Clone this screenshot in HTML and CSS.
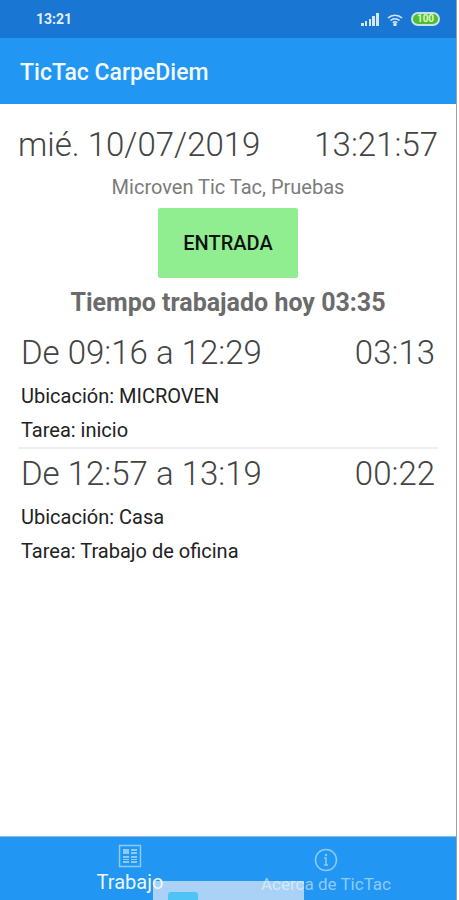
FILE: index.html
```
<!DOCTYPE html>
<html lang="es">
<head>
    <meta charset="UTF-8">
    <meta name="viewport" content="width=device-width, initial-scale=1.0">
    <title>TicTac CarpeDiem</title>
    <link rel="stylesheet" href="styles.css">
</head>
<body>
    <div class="app">
        <div class="status-bar">
            <span class="status-time">13:21</span>
            <div class="status-icons">
                <svg class="signal" viewBox="0 0 18 13" width="18" height="13">
                    <path d="M0 10h3v3H0zM4 8h2v5H4zM8 6h2v7H8zM11 3h3v10h-3zM15 0h3v13h-3z"/>
                </svg>
                <svg class="wifi" viewBox="0 0 16 13" width="16" height="13">
                    <path d="M1 5a10 10 0 0 1 14 0M3.500 7.500a6.500 6.500 0 0 1 9 0M5.800 9.800a3.200 3.200 0 0 1 4.400 0"/>
                    <circle cx="8" cy="11.500" r="1"/>
                </svg>
                <span class="battery">100</span>
            </div>
        </div>

        <header class="header">
            <h1>TicTac CarpeDiem</h1>
        </header>

        <main class="content">
            <div class="row">
                <span>mié. 10/07/2019</span>
                <span>13:21:57</span>
            </div>
            <p class="user">Microven Tic Tac, Pruebas</p>
            <button type="button" class="entry-button">ENTRADA</button>
            <h2 class="total">Tiempo trabajado hoy 03:35</h2>

            <!-- Registros del día -->
            <ul class="records">
                <li class="record">
                    <div class="row">
                        <span>De 09:16 a 12:29</span>
                        <span>03:13</span>
                    </div>
                    <p>Ubicación: MICROVEN</p>
                    <p>Tarea: inicio</p>
                </li>
                <li class="record">
                    <div class="row">
                        <span>De 12:57 a 13:19</span>
                        <span>00:22</span>
                    </div>
                    <p>Ubicación: Casa</p>
                    <p>Tarea: Trabajo de oficina</p>
                </li>
            </ul>
        </main>

        <nav class="tabs">
            <div class="toast"><span class="toast-icon"></span></div>
            <a href="#trabajo" class="tab active">
                <svg viewBox="0 0 24 24" width="24" height="24">
                    <rect x="1.500" y="1.500" width="21" height="21"/>
                    <path class="fill" d="M5 5h6v5H5zM13 5h6v2h-6zM13 8h6v2h-6zM5 12h6v2H5zM5 15h6v1H5zM5 17h6v2H5zM13 12h6v2h-6zM13 15h6v1h-6zM13 17h6v2h-6z"/>
                </svg>
                <span>Trabajo</span>
            </a>
            <a href="#acerca" class="tab">
                <svg viewBox="0 0 24 24" width="24" height="24">
                    <circle cx="12" cy="12" r="10.500"/>
                    <path d="M10 10h2v7M10 17h4"/>
                    <circle class="fill" cx="12" cy="7" r="1.200"/>
                </svg>
                <span>Acerca de TicTac</span>
            </a>
        </nav>
    </div>
</body>
</html>
```
FILE: styles.css
```
* {
    box-sizing: border-box;
}

body {
    font-family: Roboto, "Liberation Sans", sans-serif;
    background-color: white;
    color: #222;
    margin: 0;
}

h1, h2, p, ul {
    margin: 0;
    padding: 0;
}

.app {
    display: flex;
    flex-direction: column;
    min-height: 100vh;
    margin-right: 2px;
    border-right: 1px solid #a0a0a6;
}

.status-bar {
    display: flex;
    justify-content: space-between;
    align-items: center;
    height: 38px;
    padding: 0 16px 0 36px;
    background-color: #1976d2;
    color: #e3f0fc;
}

.status-time {
    font-size: 14px;
    font-weight: bold;
}

.status-icons {
    display: flex;
    align-items: center;
    gap: 8px;
}

.signal {
    fill: #d5e8fa;
}

.wifi {
    fill: #d5e8fa;
    stroke: #d5e8fa;
    stroke-width: 1.500;
}

.wifi path {
    fill: none;
}

.battery {
    width: 29px;
    height: 14px;
    border: 2px solid #c5e3ea;
    border-radius: 7px;
    background-color: #4fbe2c;
    color: #e0f8cc;
    font-size: 10px;
    font-weight: bold;
    line-height: 10px;
    text-align: center;
}

.header {
    display: flex;
    align-items: center;
    height: 66px;
    padding: 2px 20px 0;
    background-color: #2196f3;
}

.header h1 {
    color: #f2f9ff;
    font-size: 23px;
    font-weight: 500;
}

.content {
    flex: 1;
    padding: 20px 18px;
}

.row {
    display: flex;
    justify-content: space-between;
    color: #444;
    font-size: 33px;
    font-weight: 300;
    line-height: 42px;
}

.user {
    color: #7b7b7b;
    font-size: 20px;
    line-height: 42px;
    text-align: center;
}

.entry-button {
    display: block;
    width: 140px;
    height: 70px;
    margin: 0 auto;
    border: none;
    border-radius: 2px;
    background-color: #90ee90;
    color: #111;
    font-family: inherit;
    font-size: 20px;
    font-weight: 500;
    cursor: pointer;
}

.total {
    color: #6b6b6b;
    font-size: 25px;
    font-weight: bold;
    line-height: 50px;
    text-align: center;
}

.records {
    list-style: none;
}

.record {
    padding: 4px 3px 0;
    border-bottom: 2px solid #eee;
}

.record:last-child {
    border-bottom: none;
}

.record p {
    font-size: 20px;
    line-height: 34px;
}

.record .row {
    padding-bottom: 5px;
}

.tabs {
    position: relative;
    display: flex;
    height: 64px;
    padding: 0 32px;
    overflow: hidden;
    border-top: 1px solid #8fbde6;
    background-color: #2196f3;
}

.tab {
    display: flex;
    flex: 1;
    flex-direction: column;
    align-items: center;
    z-index: 1;
    padding-top: 11px;
    color: rgba(255, 255, 255, 0.5);
    font-size: 17px;
    line-height: 24px;
    text-decoration: none;
}

.tab.active {
    gap: 2px;
    padding-top: 7px;
    color: #eef7ff;
    font-size: 20px;
}

.tab svg {
    fill: none;
    stroke: #8dcaf8;
    stroke-width: 1.500;
}

.tab .fill {
    fill: #8dcaf8;
    stroke: none;
}

/* Aviso que asoma por detrás del texto de las pestañas */
.toast {
    position: absolute;
    bottom: 0;
    left: 50%;
    width: 151px;
    height: 19px;
    margin-left: -75px;
    background-color: rgba(205, 225, 248, 0.8);
}

.toast-icon {
    display: block;
    width: 30px;
    height: 8px;
    margin: 11px 0 0 15px;
    border-radius: 3px 3px 0 0;
    background-color: #4ec4f6;
}
```
